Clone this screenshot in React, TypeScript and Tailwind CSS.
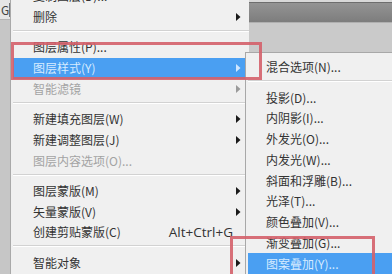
import React from "react";

type Item =
  | { sep: true }
  | { label: string; sub?: boolean; disabled?: boolean; active?: boolean; shortcut?: string };

const mainItems: Item[] = [
  { label: "复制图层(D)...", sub: false },
  { label: "删除", sub: true },
  { sep: true },
  { label: "图层属性(P)..." },
  { label: "图层样式(Y)", sub: true, active: true },
  { label: "智能滤镜", sub: true, disabled: true },
  { sep: true },
  { label: "新建填充图层(W)", sub: true },
  { label: "新建调整图层(J)", sub: true },
  { label: "图层内容选项(O)...", disabled: true },
  { sep: true },
  { label: "图层蒙版(M)", sub: true },
  { label: "矢量蒙版(V)", sub: true },
  { label: "创建剪贴蒙版(C)", shortcut: "Alt+Ctrl+G" },
  { sep: true },
  { label: "智能对象", sub: true },
];

const subItems: Item[] = [
  { label: "混合选项(N)..." },
  { sep: true },
  { label: "投影(D)..." },
  { label: "内阴影(I)..." },
  { label: "外发光(O)..." },
  { label: "内发光(W)..." },
  { label: "斜面和浮雕(B)..." },
  { label: "光泽(T)..." },
  { label: "颜色叠加(V)..." },
  { label: "渐变叠加(G)..." },
  { label: "图案叠加(Y)...", active: true },
];

function Arrow({ color }: { color: string }) {
  return (
    <svg width="5" height="8" viewBox="0 0 5 8" className="shrink-0">
      <path d="M0 0 L4.5 4 L0 8 Z" fill={color} />
    </svg>
  );
}

function Row({ item, textX }: { item: Item; textX: string }) {
  if ("sep" in item) {
    return (
      <div className="h-[9.5px] pt-[2.5px] pl-[2px]">
        <div className="h-px bg-[#d2d2d2]" />
        <div className="h-px bg-white" />
      </div>
    );
  }
  const color = item.active ? "text-[#d6ebff]" : item.disabled ? "text-[#a3a3a3]" : "text-[#333]";
  return (
    <div
      className={`flex h-[20.75px] items-center ${textX} pr-[8px] ml-[2px] ${
        item.active ? "bg-[#4a9ff2]" : ""
      } ${color}`}
    >
      <span className="flex-1 whitespace-nowrap">{item.label}</span>
      {item.shortcut && (
        <span className="mr-[8px] whitespace-nowrap font-['Open_Sans',sans-serif] text-[13.5px]">
          {item.shortcut}
        </span>
      )}
      {item.sub && <Arrow color={item.active ? "#cfe6ff" : item.disabled ? "#9a9a9a" : "#1a1a1a"} />}
    </div>
  );
}

export default function App() {
  return (
    <div
      className="relative flex h-[274px] w-[392px] overflow-hidden bg-[#f0f0f0] text-[12px] leading-none"
      style={{ fontFamily: '"Noto Sans CJK SC", "Open Sans", sans-serif' }}
    >
      {/* left gray strip */}
      <div className="flex w-[11px] shrink-0 flex-col border-r border-[#a9a9a9] bg-[#c6c6c6]">
        <div className="flex h-[20px] items-center border-b border-[#b5b5b5] bg-[#e6e6e6] pl-[1px] text-[12px] text-[#444]">
          <span className="w-[8px] overflow-hidden">G</span>
          <span className="h-[14px] w-px bg-[#777]" />
        </div>
      </div>

      {/* main context menu */}
      <div className="w-[238px] shrink-0 bg-[#f0f0f0]">
        <div className="-mt-[14px]">
          {mainItems.map((it, i) => (
            <Row key={i} item={it} textX="pl-[20px]" />
          ))}
        </div>
      </div>

      {/* right column: panel behind + submenu */}
      <div className="flex flex-1 flex-col">
        <div className="h-[2px] bg-[#d9d9d9]" />
        <div className="h-[20px] border-t border-[#6e6e6e] bg-gradient-to-b from-[#949494] to-[#7d7d7d]" />
        <div className="h-[31px] border-t border-[#b0b0b0] bg-[#cacaca]" />
        <div className="relative z-10 -ml-[4px] flex-1 border-l border-t border-[#a8a8a8] bg-[#f0f0f0] pt-[4px]">
          {subItems.map((it, i) => (
            <Row key={i} item={it} textX="pl-[18px]" />
          ))}
        </div>
      </div>

      {/* red annotation boxes */}
      <div className="pointer-events-none absolute left-[11px] top-[42px] z-20 h-[38px] w-[251px] border-[3px] border-[#d4606a]/90" />
      <div className="pointer-events-none absolute left-[230px] top-[236px] z-20 h-[50px] w-[145px] border-[3px] border-[#d4606a]/90" />
    </div>
  );
}
